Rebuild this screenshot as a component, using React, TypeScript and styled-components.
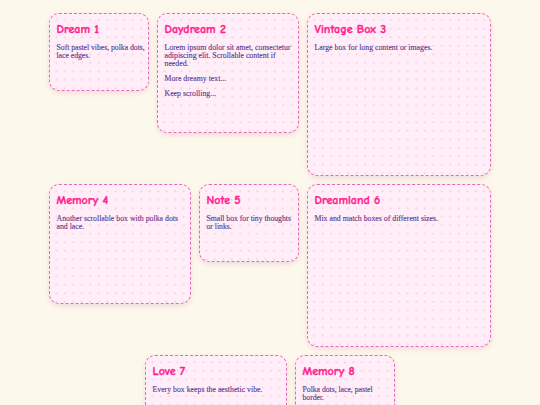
import React from "react";
import styled, { createGlobalStyle } from "styled-components";

const GlobalStyle = createGlobalStyle`
  html, body {
    margin: 0;
    padding: 0;
    background: #fdf8ec;
  }
  body {
    font-family: "Liberation Serif", "DejaVu Serif", serif;
  }
`;

type Size = "sm" | "md" | "lg";

const dims: Record<Size, { w: number; h: number }> = {
  sm: { w: 100, h: 78 },
  md: { w: 142, h: 120 },
  lg: { w: 184, h: 163 },
};

const Board = styled.main`
  display: flex;
  flex-wrap: wrap;
  justify-content: center;
  align-items: flex-start;
  gap: 8px;
  width: 442px;
  margin: 0 auto;
  padding: 13px 0;
`;

const Box = styled.section<{ $size: Size }>`
  box-sizing: border-box;
  width: ${(p) => dims[p.$size].w}px;
  height: ${(p) => dims[p.$size].h}px;
  padding: 8px 0 8px 6.5px;
  border: 1.6px dashed #e36bb0;
  border-radius: 10px;
  background-color: #ffeef8;
  background-image: radial-gradient(circle, #f2c3dc 0.7px, transparent 1.1px);
  background-size: 8.5px 8.5px;
  background-position: 2px 2px;
  box-shadow: 0 2px 5px rgba(220, 160, 190, 0.35);
  overflow: hidden;
`;

const Title = styled.h2`
  margin: 0 0 8px;
  font-family: "Comic Sans MS", "Comic Neue", "Chalkboard SE", "DejaVu Sans", sans-serif;
  font-weight: bold;
  font-size: 12px;
  line-height: 14px;
  color: #ff1f8e;
  -webkit-text-stroke: 0.35px #ff1f8e;
`;

const Text = styled.p`
  margin: 0 6px 7px 0;
  font-family: "Liberation Serif", "DejaVu Serif", serif;
  font-size: 7.8px;
  line-height: 8px;
  color: #55338a;
  -webkit-text-stroke: 0.1px #55338a;
`;

const Fit = styled(Text)`
  margin-right: 0;
  letter-spacing: -0.05px;
`;

const boxes: { title: string; size: Size; lines: string[] }[] = [
  { title: "Dream 1", size: "sm", lines: ["Soft pastel vibes, polka dots, lace edges."] },
  {
    title: "Daydream 2",
    size: "md",
    lines: [
      "Lorem ipsum dolor sit amet, consectetur adipiscing elit. Scrollable content if needed.",
      "More dreamy text...",
      "Keep scrolling...",
    ],
  },
  { title: "Vintage Box 3", size: "lg", lines: ["Large box for long content or images."] },
  { title: "Memory 4", size: "md", lines: ["Another scrollable box with polka dots and lace."] },
  { title: "Note 5", size: "sm", lines: ["Small box for tiny thoughts or links."] },
  { title: "Dreamland 6", size: "lg", lines: ["Mix and match boxes of different sizes."] },
  { title: "Love 7", size: "md", lines: ["Every box keeps the aesthetic vibe."] },
  { title: "Memory 8", size: "sm", lines: ["Polka dots, lace, pastel border."] },
];

export default function App() {
  return (
    <>
      <GlobalStyle />
      <Board>
        {boxes.map((b) => (
          <Box key={b.title} $size={b.size}>
            <Title>{b.title}</Title>
            {b.lines.map((l) =>
              b.size === "sm" ? <Fit key={l}>{l}</Fit> : <Text key={l}>{l}</Text>
            )}
          </Box>
        ))}
      </Board>
    </>
  );
}
